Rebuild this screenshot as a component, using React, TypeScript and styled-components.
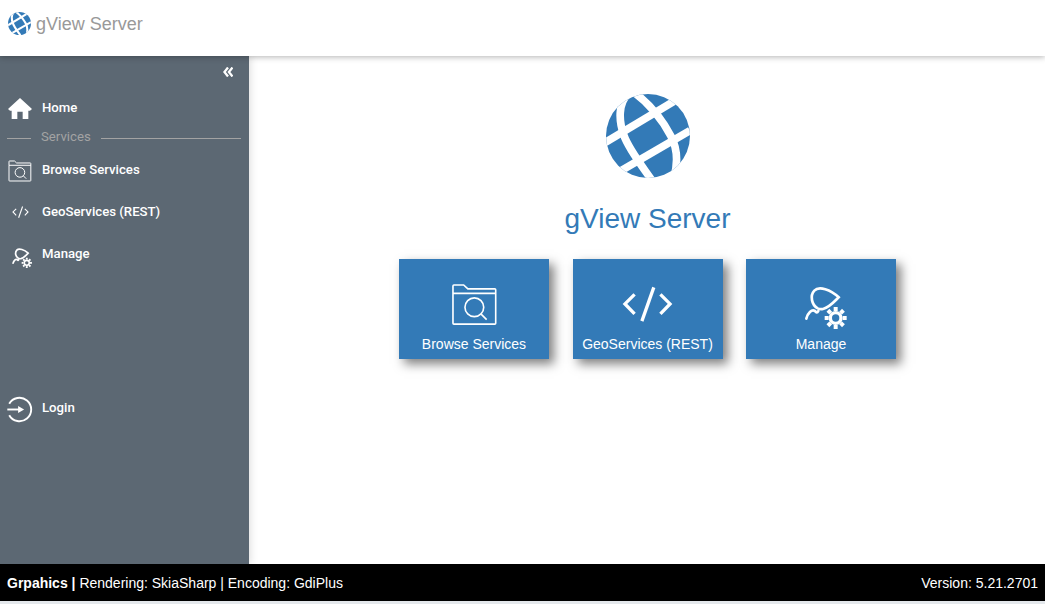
import React, { FC } from 'react';
import styled, { createGlobalStyle } from 'styled-components';

const GlobalStyle = createGlobalStyle`
	html, body {
		margin: 0;
		padding: 0;
		height: 100%;
		background: #fff;
		overflow: hidden;
	}
	* {
		box-sizing: border-box;
	}
`;

const BLUE = '#337ab7';

const Globe: FC<{ size: number; id: string }> = ({ size, id }) => (
	<svg width={size} height={size} viewBox="48 27 252 252">
		<defs>
			<clipPath id={id}>
				<circle cx="174" cy="153" r="126" />
			</clipPath>
		</defs>
		<g clipPath={`url(#${id})`}>
			<rect x="40" y="20" width="270" height="270" fill={BLUE} />
			<g fill="none" stroke="#fff" strokeWidth="23">
				<path d="M30 182L290 26" />
				<path d="M40 288L300 137" />
				<path d="M115 25C85 55 85 105 102 152C115 190 150 235 185 285" />
				<path d="M130 20C170 50 210 90 243 154C262 190 265 235 250 285" />
			</g>
		</g>
	</svg>
);

const FolderIcon: FC<{ size: number; weight?: number }> = ({ size, weight = 5 }) => (
	<svg width={size} height={size * 0.93} viewBox="180 95 145 135" fill="none" stroke="#fff" strokeWidth={weight}>
		<path d="M186 127V104Q186 101 189 101H219L232 113H315Q318 113 318 116V219Q318 222 315 222H189Q186 222 186 219ZM186 127H318" />
		<circle cx="252" cy="170" r="29" />
		<path d="M273 191L290 208" />
	</svg>
);

const CodeIcon: FC<{ size: number; weight?: number }> = ({ size, weight = 10 }) => (
	<svg width={size} height={size * 0.73} viewBox="172 106 154 112" fill="none" stroke="#fff" strokeWidth={weight}>
		<path d="M210 131L181 160L210 190" />
		<path d="M288 131L317 160L288 190" />
		<path d="M268 110L232 212" />
	</svg>
);

const ManageIcon: FC<{ size: number; weight?: number }> = ({ size, weight = 8 }) => (
	<svg width={size} height={size} viewBox="715 105 135 135" fill="none" stroke="#fff">
		<path
			strokeWidth={weight}
			d="M756 178C738 168 732 140 746 125C760 110 795 122 819 145C806 158 790 176 772 180C766 181 762 181 756 178Z"
		/>
		<path strokeWidth={weight} strokeLinecap="round" d="M722 209C726 192 738 180 748 186C752 190 754 194 758 186" />
		<circle cx="810" cy="207" r="16" strokeWidth="10" />
		{[0, 45, 90, 135, 180, 225, 270, 315].map((a) => (
			<rect
				key={a}
				x="804"
				y="174"
				width="12"
				height="12"
				fill="#fff"
				stroke="none"
				transform={`rotate(${a} 810 207)`}
			/>
		))}
	</svg>
);

const HomeIcon: FC = () => (
	<svg width="24" height="21" viewBox="24 294 72 63">
		<path
			fill="#fff"
			fillRule="evenodd"
			d="M60 294L96 327L90 332H85V357H68V335H52V357H35V332H30L24 327Z"
		/>
	</svg>
);

const LoginIcon: FC = () => (
	<svg width="27" height="27" viewBox="19 31 82 82" fill="none" stroke="#fff" strokeWidth="6">
		<path d="M26 54A37 37 0 1 1 26 90" />
		<path d="M20 72H62" />
		<path d="M54 61L73 72L54 83Z" fill="#fff" stroke="none" />
	</svg>
);

const CollapseIcon: FC = () => (
	<svg width="10" height="10" viewBox="0 0 10 10" fill="none" stroke="#fff" strokeWidth="2.3">
		<path d="M5 0.5L1.4 5L5 9.5" />
		<path d="M9.5 0.5L5.9 5L9.5 9.5" />
	</svg>
);

const App: FC = () => (
	<Page>
		<GlobalStyle />
		<Header>
			<Globe size={23} id="globe-small" />
			<Brand>gView Server</Brand>
		</Header>
		<Middle>
			<Sidebar>
				<CollapseRow>
					<CollapseIcon />
				</CollapseRow>
				<NavItem>
					<NavIcon $dy={3}>
						<HomeIcon />
					</NavIcon>
					<NavLabel>Home</NavLabel>
				</NavItem>
				<NavDivider>
					<DividerLine $width={24} />
					<DividerLabel>Services</DividerLabel>
					<DividerLine $width={140} />
				</NavDivider>
				<NavItem>
					<NavIcon $dy={4}>
						<FolderIcon size={24} weight={6} />
					</NavIcon>
					<NavLabel>Browse Services</NavLabel>
				</NavItem>
				<NavItem>
					<NavIcon $dy={3}>
						<CodeIcon size={17} weight={10} />
					</NavIcon>
					<NavLabel>GeoServices (REST)</NavLabel>
				</NavItem>
				<NavItem>
					<NavIcon $dy={8} $dx={5}>
						<ManageIcon size={23} weight={11} />
					</NavIcon>
					<NavLabel>Manage</NavLabel>
				</NavItem>
				<LoginItem>
					<NavIcon $dy={4}>
						<LoginIcon />
					</NavIcon>
					<NavLabel>Login</NavLabel>
				</LoginItem>
			</Sidebar>
			<Content>
				<Globe size={84} id="globe-large" />
				<Title>gView Server</Title>
				<Tiles>
					<Tile>
						<TileIcon>
							<FolderIcon size={47} />
						</TileIcon>
						<TileLabel>Browse Services</TileLabel>
					</Tile>
					<Tile>
						<TileIcon>
							<CodeIcon size={51} />
						</TileIcon>
						<TileLabel>GeoServices (REST)</TileLabel>
					</Tile>
					<Tile>
						<TileIcon $dx={10} $dy={19}>
							<ManageIcon size={45} />
						</TileIcon>
						<TileLabel>Manage</TileLabel>
					</Tile>
				</Tiles>
			</Content>
		</Middle>
		<Footer>
			<FooterInfo>
				<strong>Grpahics |</strong> Rendering: SkiaSharp | Encoding: GdiPlus
			</FooterInfo>
			<span>Version: 5.21.2701</span>
		</Footer>
	</Page>
);

const Page = styled.div`
	width: 1045px;
	height: 604px;
	display: flex;
	flex-direction: column;
	background: #e4e8ec;
	font-family: 'Liberation Sans', Arial, sans-serif;
`;

const Header = styled.header`
	position: relative;
	z-index: 2;
	height: 56px;
	flex: none;
	display: flex;
	align-items: flex-start;
	gap: 5px;
	padding: 12px 0 0 8px;
	background: #fff;
	box-shadow: 0 1px 6px rgba(0, 0, 0, 0.3);
`;

const Brand = styled.span`
	font-size: 18px;
	line-height: 24px;
	color: #999;
`;

const Middle = styled.div`
	height: 508px;
	flex: none;
	display: flex;
	background: #fff;
`;

const Sidebar = styled.nav`
	position: relative;
	z-index: 1;
	width: 249px;
	flex: none;
	display: flex;
	flex-direction: column;
	background: #5c6873;
	box-shadow: 1px 0 8px rgba(0, 0, 0, 0.15);
	font-family: Roboto, 'Liberation Sans', sans-serif;
`;

const CollapseRow = styled.div`
	height: 30px;
	flex: none;
	display: flex;
	justify-content: flex-end;
	padding: 11px 16px 0 0;
`;

const NavItem = styled.div`
	height: 42px;
	flex: none;
	display: flex;
	align-items: center;
	padding-left: 7px;
`;

const LoginItem = styled(NavItem)`
	margin-top: 112px;
`;

const NavIcon = styled.span<{ $dx?: number; $dy?: number }>`
	width: 26px;
	height: 30px;
	flex: none;
	display: flex;
	align-items: center;
	justify-content: center;
	margin-right: 9px;
	padding: ${(props) => props.$dy ?? 0}px 0 0 ${(props) => props.$dx ?? 0}px;
`;

const NavLabel = styled.span`
	font-size: 13.2px;
	font-weight: 500;
	line-height: 16px;
	margin-top: 1px;
	color: #fff;
`;

const NavDivider = styled.div`
	height: 20px;
	flex: none;
	display: flex;
	align-items: center;
	gap: 10px;
	padding: 0 0 4px 7px;
`;

const DividerLine = styled.span<{ $width: number }>`
	width: ${(props) => props.$width}px;
	height: 1px;
	margin-top: 4px;
	background: #a3a3a3;
`;

const DividerLabel = styled.span`
	font-size: 13.2px;
	line-height: 16px;
	margin-top: 2px;
	color: #a3a3a3;
`;

const Content = styled.main`
	flex: 1;
	display: flex;
	flex-direction: column;
	align-items: center;
	padding: 38px 0 0 1px;
`;

const Title = styled.h1`
	margin: 22px 0 21px;
	font-size: 28px;
	font-weight: 400;
	line-height: 38px;
	color: ${BLUE};
`;

const Tiles = styled.div`
	display: flex;
	gap: 23.5px;
`;

const Tile = styled.div`
	width: 150px;
	height: 100px;
	display: flex;
	flex-direction: column;
	align-items: center;
	background: ${BLUE};
	box-shadow: 5px 5px 10px rgba(0, 0, 0, 0.5);
`;

const TileIcon = styled.div<{ $dx?: number; $dy?: number }>`
	height: 75px;
	flex: none;
	display: flex;
	align-items: center;
	justify-content: center;
	padding: ${(props) => props.$dy ?? 17}px 0 0 ${(props) => props.$dx ?? 0}px;
`;

const TileLabel = styled.span`
	font-size: 14px;
	line-height: 20px;
	color: #fff;
`;

const Footer = styled.footer`
	height: 37px;
	flex: none;
	display: flex;
	align-items: center;
	justify-content: space-between;
	padding: 0 7px;
	background: #000;
	font-size: 14px;
	color: #fff;
`;

const FooterInfo = styled.span`
	strong {
		font-weight: 700;
	}
`;

export default App;
